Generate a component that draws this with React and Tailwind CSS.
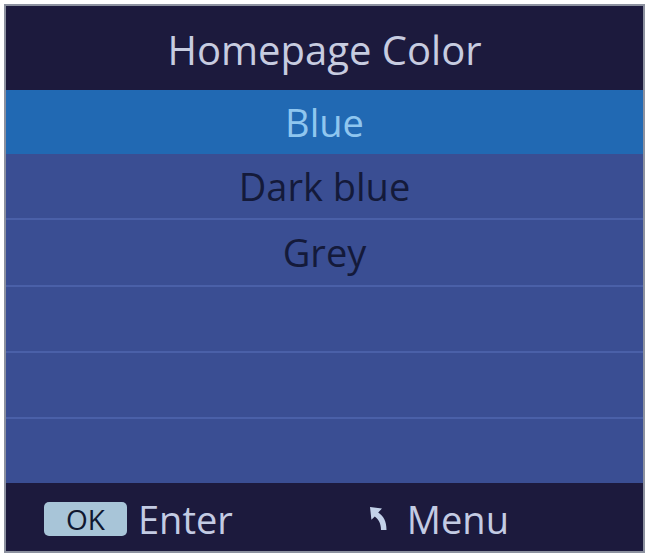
import React from "react";

const items = [
  { label: "Blue", active: true },
  { label: "Dark blue" },
  { label: "Grey" },
  { label: "" },
  { label: "" },
  { label: "" },
];

function BackIcon() {
  return (
    <svg width="22" height="26" viewBox="0 0 22 26" className="text-[#c3d2ea]">
      <path d="M1 1 L13 2.5 L9.2 6.6 C14.5 10 17.5 15.5 17.5 24 L12 24 C12 17.5 9.8 13.5 5.8 10.4 L2.4 13.8 Z" fill="currentColor" />
    </svg>
  );
}

export default function App() {
  return (
    <div
      className="w-[648px] h-[559px] bg-white pt-[4px] pl-[4px]"
      style={{ fontFamily: '"Open Sans", "Noto Sans", sans-serif' }}
    >
      <div className="w-[641px] h-[549px] border-2 border-[#8c919f] flex flex-col bg-[#1c1a3d]">
        <div className="h-[84px] flex items-center justify-center text-[40px] text-[#c7cce0] leading-none pt-[3px]">
          Homepage Color
        </div>
        <div className="flex-1 flex flex-col bg-[#3a4e93]">
          {items.map((it, i) => (
            <div
              key={i}
              className={`flex-1 flex items-center justify-center text-[38px] leading-none ${
                it.active
                  ? "bg-[#2169b3] text-[#8fc6ef]"
                  : i > 1
                  ? "border-t-2 border-[#4a60a8] text-[#141a3a]"
                  : "text-[#141a3a]"
              }`}
            >
              {it.label}
            </div>
          ))}
        </div>
        <div className="h-[68px] flex items-center text-[38px] leading-none text-[#c3cbe3] pt-[3px]">
          <div className="ml-[38px] w-[83px] h-[34px] rounded-[5px] bg-[#a8c5d8] flex items-center justify-center text-[28px] text-[#101830]">
            OK
          </div>
          <span className="ml-[11px]">Enter</span>
          <div className="ml-[136px] flex items-center">
            <BackIcon />
          </div>
          <span className="ml-[16px]">Menu</span>
        </div>
      </div>
    </div>
  );
}
